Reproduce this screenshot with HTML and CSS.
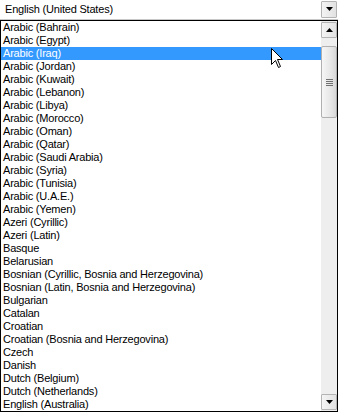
FILE: index.html
```html
<!DOCTYPE html>
<html>
<head>
<meta charset="utf-8">
<link rel="stylesheet" href="styles.css">
</head>
<body>
<div class="page">
  <div class="combo">
    <span class="combo-text">English (United States)</span>
    <span class="btn combo-btn"><svg width="7" height="4" viewBox="0 0 7 4"><path d="M0 0H7L3.5 4Z" fill="#000"/></svg></span>
  </div>
  <div class="list">
    <ul class="items">
      <li>Arabic (Bahrain)</li>
      <li>Arabic (Egypt)</li>
      <li class="sel">Arabic (Iraq)</li>
      <li>Arabic (Jordan)</li>
      <li>Arabic (Kuwait)</li>
      <li>Arabic (Lebanon)</li>
      <li>Arabic (Libya)</li>
      <li>Arabic (Morocco)</li>
      <li>Arabic (Oman)</li>
      <li>Arabic (Qatar)</li>
      <li>Arabic (Saudi Arabia)</li>
      <li>Arabic (Syria)</li>
      <li>Arabic (Tunisia)</li>
      <li>Arabic (U.A.E.)</li>
      <li>Arabic (Yemen)</li>
      <li>Azeri (Cyrillic)</li>
      <li>Azeri (Latin)</li>
      <li>Basque</li>
      <li>Belarusian</li>
      <li>Bosnian (Cyrillic, Bosnia and Herzegovina)</li>
      <li>Bosnian (Latin, Bosnia and Herzegovina)</li>
      <li>Bulgarian</li>
      <li>Catalan</li>
      <li>Croatian</li>
      <li>Croatian (Bosnia and Herzegovina)</li>
      <li>Czech</li>
      <li>Danish</li>
      <li>Dutch (Belgium)</li>
      <li>Dutch (Netherlands)</li>
      <li>English (Australia)</li>
    </ul>
    <div class="scrollbar">
      <span class="btn sb-btn"><svg width="7" height="4" viewBox="0 0 7 4"><path d="M0 4H7L3.5 0Z" fill="#000"/></svg></span>
      <div class="track">
        <div class="thumb"><span class="grip"></span><span class="grip"></span><span class="grip"></span><span class="grip"></span></div>
      </div>
      <span class="btn sb-btn"><svg width="7" height="4" viewBox="0 0 7 4"><path d="M0 0H7L3.5 4Z" fill="#000"/></svg></span>
    </div>
  </div>
  <svg class="cursor" width="13" height="21" viewBox="0 0 13 21"><path d="M0.5 0.5V16.5L4.5 12.5L7.5 19.5L9.5 18.5L6.5 11.5H11.5Z" fill="#fff" stroke="#000" stroke-width="1" stroke-linejoin="miter"/></svg>
</div>
</body>
</html>
```
FILE: styles.css
```css
* { box-sizing: border-box; }
html, body { margin: 0; padding: 0; background: #fff; }
.page {
  position: relative;
  width: 338px;
  height: 412px;
  overflow: hidden;
  font-family: "Liberation Sans", Arial, sans-serif;
  font-size: 11px;
  letter-spacing: -0.2px;
  color: #000;
}
.combo {
  height: 20px;
  display: flex;
  align-items: center;
  justify-content: space-between;
  padding: 0 1px 1px 5px;
  border-bottom: 1px solid #c8c8c8;
  background: #fff;
}
.combo-text { line-height: 13px; }
.btn {
  width: 16px;
  height: 16px;
  display: flex;
  align-items: center;
  justify-content: center;
  border: 1px solid #b4b4b4;
  border-radius: 1px;
  background: linear-gradient(to right, #f4f4f4, #e2e2e2);
}
.combo-btn { height: 17px; }
.list {
  height: 392px;
  border: 1px solid #000;
  display: flex;
}
.items {
  list-style: none;
  margin: 0;
  padding: 0;
  flex: 1;
  overflow: hidden;
}
.items li {
  height: 13px;
  line-height: 13px;
  padding-left: 2px;
  white-space: nowrap;
}
.items li.sel {
  background: #3399ff;
  color: #fff;
}
.scrollbar {
  width: 16px;
  display: flex;
  flex-direction: column;
  background: #eeeeee;
  padding: 1px 0 1px 0;
}
.sb-btn { flex: none; }
.track {
  flex: 1;
  padding-top: 8px;
}
.thumb {
  height: 72px;
  border: 1px solid #b0b0b0;
  border-radius: 2px;
  background: linear-gradient(to right, #f6f6f6, #e4e4e4 70%, #d8d8d8);
  display: flex;
  flex-direction: column;
  align-items: center;
  justify-content: center;
  gap: 1px;
}
.grip {
  width: 7px;
  height: 1px;
  background: #707070;
}
.cursor {
  position: absolute;
  left: 271px;
  top: 48px;
}
```
